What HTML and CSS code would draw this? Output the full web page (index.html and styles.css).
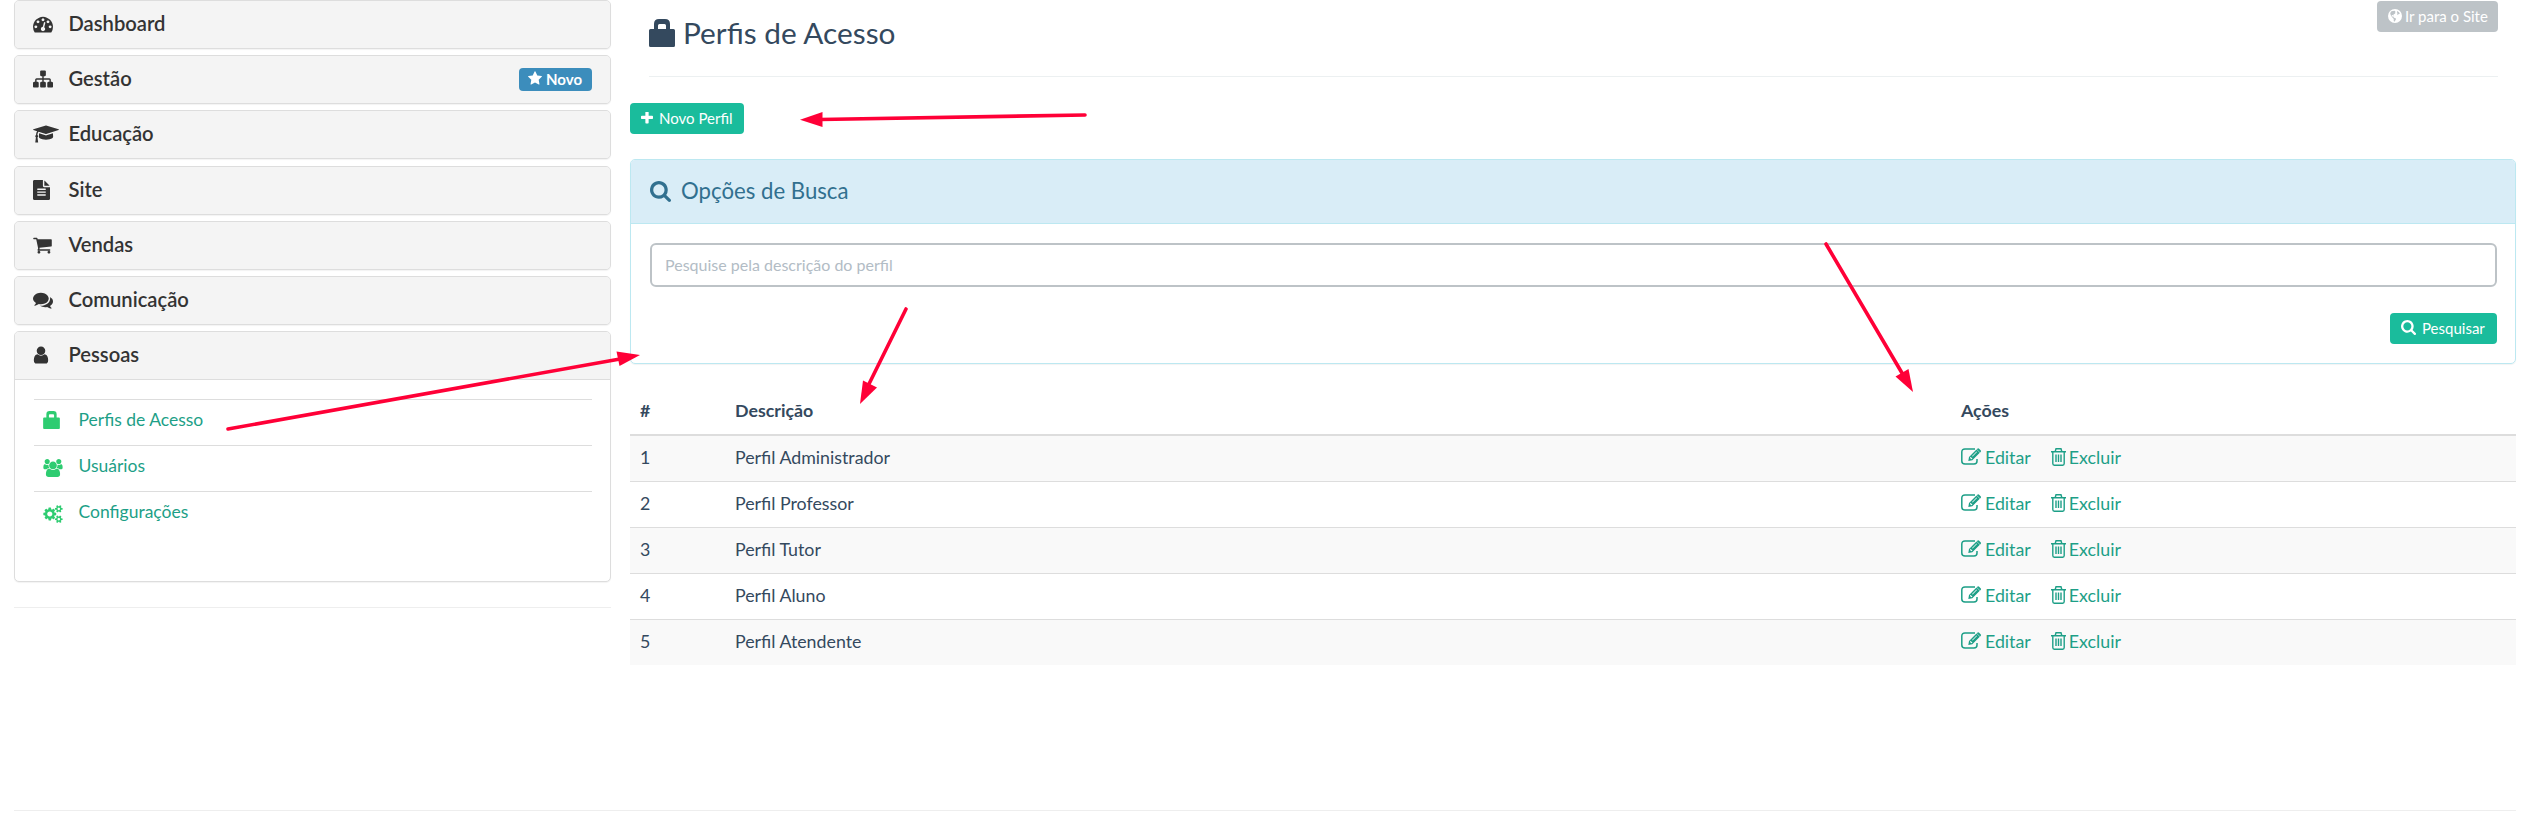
FILE: index.html
```html
<!DOCTYPE html>
<html lang="pt-BR">
<head>
<meta charset="utf-8">
<title>Perfis de Acesso</title>
<link rel="stylesheet" href="styles.css">
</head>
<body>
<svg class="sprite" aria-hidden="true">
  <symbol id="tachometer" viewBox="0 0 1792 1792"><path d="M384 1152q0-53-37.500-90.500t-90.500-37.500-90.500 37.500-37.500 90.500 37.500 90.500 90.500 37.500 90.500-37.500 37.500-90.500zm192-448q0-53-37.500-90.500t-90.500-37.500-90.500 37.500-37.500 90.500 37.500 90.500 90.500 37.500 90.500-37.500 37.500-90.500zm428 481l101-382q6-26-7.500-48.500t-38.500-29.500-48 6.500-30 39.500l-101 382q-60 5-107 43.500t-63 98.500q-20 77 20 146t117 89 146-20 89-117q16-60-6-117t-72-91zm660-33q0-53-37.500-90.500t-90.500-37.500-90.500 37.500-37.500 90.500 37.500 90.500 90.500 37.500 90.500-37.500 37.500-90.500zm-640-640q0-53-37.500-90.500t-90.500-37.500-90.500 37.500-37.500 90.500 37.500 90.500 90.500 37.500 90.500-37.500 37.500-90.500zm448 192q0-53-37.500-90.500t-90.500-37.500-90.500 37.500-37.500 90.500 37.500 90.500 90.500 37.500 90.500-37.500 37.500-90.500zm320 448q0 261-141 483-19 29-54 29h-1402q-35 0-54-29-141-221-141-483 0-182 71-348t191-286 286-191 348-71 348 71 286 191 191 286 71 348z"/></symbol>
  <symbol id="sitemap" viewBox="0 0 1792 1792"><path d="M1792 1248v320q0 40-28 68t-68 28h-320q-40 0-68-28t-28-68v-320q0-40 28-68t68-28h96v-192h-512v192h96q40 0 68 28t28 68v320q0 40-28 68t-68 28h-320q-40 0-68-28t-28-68v-320q0-40 28-68t68-28h96v-192h-512v192h96q40 0 68 28t28 68v320q0 40-28 68t-68 28h-320q-40 0-68-28t-28-68v-320q0-40 28-68t68-28h96v-192q0-52 38-90t90-38h512v-192h-96q-40 0-68-28t-28-68v-320q0-40 28-68t68-28h320q40 0 68 28t28 68v320q0 40-28 68t-68 28h-96v192h512q52 0 90 38t38 90v192h96q40 0 68 28t28 68z"/></symbol>
  <symbol id="graduation" viewBox="0 0 2304 1792"><path d="M1774 836l18 316q4 69-82 128t-235 93.500-323 34.500-323-34.500-235-93.500-82-128l18-316 574 181q22 7 48 7t48-7zm530-324q0 23-22 31l-1120 352q-4 1-10 1t-10-1l-652-206q-43 34-71 111.500t-34 178.500q63 36 63 109 0 69-58 107l58 433q2 14-8 25-9 11-24 11h-192q-15 0-24-11-10-11-8-25l58-433q-58-38-58-107 0-73 65-111 11-207 98-330l-333-104q-22-8-22-31t22-31l1120-352q4-1 10-1t10 1l1120 352q22 8 22 31z"/></symbol>
  <symbol id="file" viewBox="128 0 1536 1792"><path d="M1596 476q14 14 28 36h-472v-472q22 14 36 28zm-476 164h544v1056q0 40-28 68t-68 28h-1344q-40 0-68-28t-28-68v-1600q0-40 28-68t68-28h800v544q0 40 28 68t68 28zm160 736v-64q0-14-9-23t-23-9h-704q-14 0-23 9t-9 23v64q0 14 9 23t23 9h704q14 0 23-9t9-23zm0-256v-64q0-14-9-23t-23-9h-704q-14 0-23 9t-9 23v64q0 14 9 23t23 9h704q14 0 23-9t9-23zm0-256v-64q0-14-9-23t-23-9h-704q-14 0-23 9t-9 23v64q0 14 9 23t23 9h704q14 0 23-9t9-23z"/></symbol>
  <symbol id="cart" viewBox="64 0 1664 1792"><path d="M704 1536q0 52-38 90t-90 38-90-38-38-90 38-90 90-38 90 38 38 90zm896 0q0 52-38 90t-90 38-90-38-38-90 38-90 90-38 90 38 38 90zm128-1088v512q0 24-16.500 42.500t-40.500 21.500l-1044 122q13 60 13 70 0 16-24 64h920q26 0 45 19t19 45-19 45-45 19h-1024q-26 0-45-19t-19-45q0-11 8-31.500t16-36 21.500-40 15.500-29.500l-177-823h-204q-26 0-45-19t-19-45 19-45 45-19h256q16 0 28.500 6.500t19.500 15.500 13 24.500 8 26 5.500 29.500 4.500 26h1201q26 0 45 19t19 45z"/></symbol>
  <symbol id="comments" viewBox="0 0 1792 1792"><path d="M1408 768q0 139-94 257t-256.500 186.500-353.500 68.500q-86 0-176-16-124 88-278 128-36 9-86 16h-3q-11 0-20.500-8t-11.500-21q-1-3-1-6.500t.5-6.500 2-6l2.500-5 3.500-5.500 4-5 4.500-5 4-4.500q5-6 23-25t26-29.500 22.500-29 25-38.500 20.500-44q-124-72-195-177t-71-224q0-139 94-257t256.500-186.500 353.500-68.500 353.500 68.500 256.500 186.500 94 257zm384 256q0 120-71 224.500t-195 176.500q10 24 20.500 44t25 38.500 22.500 29 26 29.500 23 25q1 1 4 4.500t4.500 5 4 5 3.500 5.500l2.500 5 2 6 .5 6.500-1 6.500q-3 14-13 22t-22 7q-50-7-86-16-154-40-278-128-90 16-176 16-271 0-472-132 58 4 88 4 161 0 309-45t264-129q125-92 192-212t67-254q0-77-23-152 129 71 204 178t75 230z"/></symbol>
  <symbol id="user" viewBox="256 0 1280 1792"><path d="M1536 1399q0 109-62.500 187t-150.500 78h-854q-88 0-150.500-78t-62.500-187q0-85 8.500-160.500t31.500-152 58.500-131 94-89 134.500-34.500q131 128 313 128t313-128q76 0 134.500 34.500t94 89 58.500 131 31.500 152 8.500 160.500zm-256-887q0 159-112.500 271.500t-271.500 112.500-271.500-112.500-112.500-271.500 112.500-271.500 271.500-112.500 271.500 112.500 112.500 271.500z"/></symbol>
  <symbol id="lock" viewBox="0 0 26 28"><path fill-rule="evenodd" d="M1.500 10H5V5q0-5 5-5h6q5 0 5 5v5h3.500q1.500 0 1.500 1.500v15q0 1.500-1.500 1.500h-23q-1.500 0-1.500-1.500v-15q0-1.500 1.500-1.500zM9 10h8V6.500q0-1.500-1.500-1.500h-5Q9 5 9 6.500z"/></symbol>
  <symbol id="users" viewBox="0 0 1920 1792"><path d="M593 896q-162 5-265 128h-134q-82 0-138-40.500t-56-118.500q0-353 124-353 6 0 43.500 21t97.500 42.500 119 21.500q67 0 133-23-5 37-5 66 0 139 81 256zm1071 637q0 120-73 189.500t-194 69.500h-874q-121 0-194-69.500t-73-189.500q0-53 3.500-103.500t14-109 26.500-108.500 43-97.500 62-81 85.500-53.500 111.500-20q10 0 43 21.500t73 48 107 48 135 21.500 135-21.500 107-48 73-48 43-21.500q61 0 111.500 20t85.500 53.500 62 81 43 97.500 26.500 108.500 14 109 3.500 103.500zm-1024-1277q0 106-75 181t-181 75-181-75-75-181 75-181 181-75 181 75 75 181zm704 384q0 159-112.500 271.500t-271.500 112.500-271.500-112.500-112.500-271.500 112.500-271.500 271.500-112.500 271.500 112.500 112.500 271.500zm576 225q0 78-56 118.500t-138 40.500h-134q-103-123-265-128 81-117 81-256 0-29-5-66 66 23 133 23 59 0 119-21.500t97.500-42.500 43.500-21q124 0 124 353zm-128-609q0 106-75 181t-181 75-181-75-75-181 75-181 181-75 181 75 75 181z"/></symbol>
  <symbol id="cogs" viewBox="0 0 1920 1792"><path d="M896 896q0-106-75-181t-181-75-181 75-75 181 75 181 181 75 181-75 75-181zm768 512q0-52-38-90t-90-38-90 38-38 90q0 53 37.500 90.500t90.500 37.500 90.500-37.500 37.500-90.500zm0-1024q0-52-38-90t-90-38-90 38-38 90q0 53 37.500 90.500t90.500 37.500 90.500-37.500 37.500-90.500zm-384 421v185q0 10-7 19.500t-16 10.500l-155 24q-11 35-32 76 34 48 90 115 7 11 7 20 0 12-7 19-23 30-82.500 89.500t-78.500 59.500q-11 0-21-7l-115-90q-37 19-77 31-11 108-23 155-7 24-30 24h-186q-11 0-20-7.500t-10-17.500l-23-153q-34-10-75-31l-118 89q-7 7-20 7-11 0-21-8-144-133-144-160 0-9 7-19 10-14 41-53t47-61q-23-44-35-82l-152-24q-10-1-17-9.500t-7-19.500v-185q0-10 7-19.500t16-10.500l155-24q11-35 32-76-34-48-90-115-7-11-7-20 0-12 7-20 22-30 82-89t79-59q11 0 21 7l115 90q34-18 77-32 11-108 23-154 7-24 30-24h186q11 0 20 7.500t10 17.500l23 153q34 10 75 31l118-89q8-7 20-7 11 0 21 8 144 133 144 160 0 8-7 19-12 16-42 54t-45 60q23 48 34 82l152 23q10 2 17 10.500t7 19.500zm640 533v140q0 16-149 31-12 27-30 52 51 113 51 138 0 4-4 7-122 71-124 71-8 0-46-47t-52-68q-20 2-30 2t-30-2q-14 21-52 68t-46 47q-2 0-124-71-4-3-4-7 0-25 51-138-18-25-30-52-149-15-149-31v-140q0-16 149-31 13-29 30-52-51-113-51-138 0-4 4-7 4-2 35-20t59-34 30-16q8 0 46 46.500t52 67.500q20-2 30-2t30 2q51-71 92-112l6-2q4 0 124 70 4 3 4 7 0 25-51 138 17 23 30 52 149 15 149 31zm0-1024v140q0 16-149 31-12 27-30 52 51 113 51 138 0 4-4 7-122 71-124 71-8 0-46-47t-52-68q-20 2-30 2t-30-2q-14 21-52 68t-46 47q-2 0-124-71-4-3-4-7 0-25 51-138-18-25-30-52-149-15-149-31v-140q0-16 149-31 13-29 30-52-51-113-51-138 0-4 4-7 4-2 35-20t59-34 30-16q8 0 46 46.500t52 67.500q20-2 30-2t30 2q51-71 92-112l6-2q4 0 124 70 4 3 4 7 0 25-51 138 17 23 30 52 149 15 149 31z"/></symbol>
  <symbol id="star" viewBox="64 0 1664 1792"><path d="M1728 647q0 22-26 48l-363 354 86 500q1 7 1 20 0 21-10.500 35.500t-30.500 14.500q-19 0-40-12l-449-236-449 236q-22 12-40 12-21 0-31.500-14.500t-10.500-35.500q0-6 2-20l86-500-364-354q-25-27-25-48 0-37 56-46l502-73 225-455q19-41 49-41t49 41l225 455 502 73q56 9 56 46z"/></symbol>
  <symbol id="plus" viewBox="192 192 1408 1408"><path d="M1600 736v192q0 40-28 68t-68 28h-416v416q0 40-28 68t-68 28h-192q-40 0-68-28t-28-68v-416h-416q-40 0-68-28t-28-68v-192q0-40 28-68t68-28h416v-416q0-40 28-68t68-28h192q40 0 68 28t28 68v416h416q40 0 68 28t28 68z"/></symbol>
  <symbol id="search" viewBox="64 128 1664 1664"><path d="M1216 832q0-185-131.500-316.500t-316.500-131.500-316.500 131.500-131.500 316.500 131.500 316.500 316.500 131.500 316.500-131.500 131.500-316.500zm512 832q0 52-38 90t-90 38q-54 0-90-38l-343-342q-179 124-399 124-143 0-273.500-55.500t-225-150-150-225-55.500-273.500 55.500-273.500 150-225 225-150 273.500-55.500 273.500 55.500 225 150 150 225 55.500 273.500q0 220-124 399l343 343q37 37 37 90z"/></symbol>
  <symbol id="globe" viewBox="0 0 14 14"><path fill-rule="evenodd" d="M7 0a7 7 0 1 1 0 14A7 7 0 0 1 7 0zM3 2.600L4.600 2l2-.3.900.8-.7.800.9.400L6.500 5l-1 .3.300 1.200-1.200-.6-1 .3.400 1.200 1.400.2.500 1.100 1.300.3.900.9-.8 1.600-.9 1.200-.7-.8.100-1.900-1.200-1.300L3 6.700 2.200 4.600zM9.200 2l1.800 1.200.9 1.500-1.200.2-.9 1-.8-1 .7-.8-.8-.5z"/></symbol>
  <symbol id="edit" viewBox="0 0 21 17"><path fill="none" stroke="currentColor" stroke-width="1.500" d="M14 1H4Q.8 1 .8 4v9q0 3 3.200 3h9q3 0 3-3v-2"/><path fill-rule="evenodd" d="M7.300 13l.7-4L15.500 1.500l3.300 3.300L11.300 12.300zM9 10l1.300 1.300 1.200-.5-2-2zM11 8l.5.500 4.500-4.500-.5-.5zM16.300.7q.9-.9 1.800 0L19.600 2.200q.9.900 0 1.800l-.5.500-3.300-3.300z"/></symbol>
  <symbol id="trash" viewBox="0 0 15 18"><path fill="none" stroke="currentColor" stroke-width="1.400" d="M0 3.700h15M4.200 3.500L5 .8h5l.8 2.700M1.800 4v11.500q0 1.700 1.500 1.700h8.400q1.500 0 1.500-1.700V4M5 6.500v7.500M7.500 6.500v7.500M10 6.500v7.500"/></symbol>
</svg>

<div class="layout">
  <aside class="sidebar">
    <div class="panel"><div class="item"><span class="slot"><svg class="i20"><use href="#tachometer"/></svg></span>Dashboard</div></div>
    <div class="panel"><div class="item"><span class="slot"><svg class="i20"><use href="#sitemap"/></svg></span>Gestão<span class="badge"><svg><use href="#star"/></svg>Novo</span></div></div>
    <div class="panel"><div class="item"><span class="slot"><svg class="i26"><use href="#graduation"/></svg></span>Educação</div></div>
    <div class="panel"><div class="item"><span class="slot"><svg class="i17"><use href="#file"/></svg></span>Site</div></div>
    <div class="panel"><div class="item"><span class="slot"><svg class="i19"><use href="#cart"/></svg></span>Vendas</div></div>
    <div class="panel"><div class="item"><span class="slot"><svg class="i20"><use href="#comments"/></svg></span>Comunicação</div></div>
    <div class="panel open">
      <div class="item"><span class="slot"><svg class="i16"><use href="#user"/></svg></span>Pessoas</div>
      <div class="submenu">
        <a class="sub"><span class="slot"><svg class="s-lock"><use href="#lock"/></svg></span>Perfis de Acesso</a>
        <a class="sub"><span class="slot"><svg class="s-wide"><use href="#users"/></svg></span>Usuários</a>
        <a class="sub"><span class="slot"><svg class="s-wide"><use href="#cogs"/></svg></span>Configurações</a>
      </div>
    </div>
    <hr class="side-rule">
  </aside>

  <main class="main">
    <header class="head">
      <h1 class="title"><svg><use href="#lock"/></svg>Perfis de Acesso</h1>
      <a class="btn grey"><svg class="g-globe"><use href="#globe"/></svg>Ir para o Site</a>
    </header>
    <a class="btn new"><svg class="g-plus"><use href="#plus"/></svg>Novo Perfil</a>
    <section class="search">
      <h3 class="search-head"><svg><use href="#search"/></svg>Opções de Busca</h3>
      <div class="search-body">
        <input class="field" type="text" placeholder="Pesquise pela descrição do perfil">
        <a class="btn go"><svg class="g-search"><use href="#search"/></svg>Pesquisar</a>
      </div>
    </section>
    <table class="table">
      <thead><tr><th class="c1">#</th><th class="c2">Descrição</th><th>Ações</th></tr></thead>
      <tbody>
        <tr><td>1</td><td>Perfil Administrador</td><td><div class="acts"><a><svg class="a-edit"><use href="#edit"/></svg>Editar</a><a><svg class="a-trash"><use href="#trash"/></svg>Excluir</a></div></td></tr>
        <tr><td>2</td><td>Perfil Professor</td><td><div class="acts"><a><svg class="a-edit"><use href="#edit"/></svg>Editar</a><a><svg class="a-trash"><use href="#trash"/></svg>Excluir</a></div></td></tr>
        <tr><td>3</td><td>Perfil Tutor</td><td><div class="acts"><a><svg class="a-edit"><use href="#edit"/></svg>Editar</a><a><svg class="a-trash"><use href="#trash"/></svg>Excluir</a></div></td></tr>
        <tr><td>4</td><td>Perfil Aluno</td><td><div class="acts"><a><svg class="a-edit"><use href="#edit"/></svg>Editar</a><a><svg class="a-trash"><use href="#trash"/></svg>Excluir</a></div></td></tr>
        <tr><td>5</td><td>Perfil Atendente</td><td><div class="acts"><a><svg class="a-edit"><use href="#edit"/></svg>Editar</a><a><svg class="a-trash"><use href="#trash"/></svg>Excluir</a></div></td></tr>
      </tbody>
    </table>
  </main>
</div>
<hr class="foot-rule">

<svg class="arrows" viewBox="0 0 2531 830" aria-hidden="true">
  <g stroke="#ff0037" stroke-width="3.600" stroke-linecap="round">
    <path d="M1085 115L820 119.500M228 429L620 359M906 309L868 386M1826 244L1902 373"/>
  </g>
  <g fill="#ff0037">
    <path d="M800 119.700l22.500-7.700v15z"/><path d="M640 355l-23.500-3.500 3 14.500z"/><path d="M860 404l3-23.500 14 7z"/><path d="M1913 392l-4.500-23-13 7.500z"/>
  </g>
</svg>
</body>
</html>
```
FILE: styles.css
```css
* { box-sizing: border-box; }
body { margin: 0; height: 830px; overflow: hidden; background: #fff; color: #34495e; font: 17.8px/26px Lato, "Open Sans", sans-serif; position: relative; }
svg { fill: currentColor; display: block; flex: none; }
.sprite { display: none; }
hr { border: 0; border-top: 1px solid #eee; margin: 0; }
.layout { display: flex; gap: 19px; padding: 0 15px 0 14px; height: 810px; }
.sidebar { width: 597px; flex: none; display: flex; flex-direction: column; }
.panel { border: 1px solid #ddd; border-radius: 5px; background: #f4f4f4; box-shadow: 0 1px 1px rgba(0,0,0,.05); margin-bottom: 6.2px; height: 49px; flex: none; overflow: hidden; }
.panel.open { height: 251px; background: #fff; margin-bottom: 25px; }
.item { display: flex; align-items: center; height: 47px; padding: 0 18px 3px; background: #f4f4f4; color: #333; font-size: 20.2px; font-weight: 600; }
.open .item { height: 48px; border-bottom: 1px solid #ddd; }
.item .slot { width: 35.5px; padding-top: 2px; }
.i20 { width: 20px; height: 20px; } .i26 { width: 26px; height: 20px; } .i17 { width: 17px; height: 20px; }
.i19 { width: 19px; height: 20px; } .i16 { width: 16px; height: 20px; }
.badge { margin: 3px 0 0 auto; display: flex; align-items: center; gap: 4px; height: 23px; width: 73px; padding: 0 0 2px 9px; border-radius: 4px; background: #3c8dbc; color: #fff; font-size: 15px; font-weight: 700; }
.badge svg { width: 14px; height: 15px; }
.submenu { padding: 19px 18px 0 19px; }
.sub { display: flex; align-items: center; height: 46px; border-top: 1px solid #ddd; padding: 0 0 5px 9px; color: #1d9f87; font-size: 17.5px; }
.sub .slot { width: 35.5px; color: #2ecc71; }
.s-lock { width: 17px; height: 18px; } .s-wide { width: 20px; height: 18px; margin-top: 3px; }
.main { flex: 1; display: flex; flex-direction: column; align-items: flex-start; }
.head { width: 1849px; margin-left: 19px; height: 77px; border-bottom: 1px solid #ecf0f1; display: flex; justify-content: space-between; align-items: flex-start; padding-top: 1px; }
.title { margin: 0; display: flex; align-items: center; gap: 8px; height: 64px; font-size: 29.8px; font-weight: 400; }
.title svg { width: 26px; height: 28px; }
.btn { display: flex; align-items: center; height: 31px; border-radius: 4px; background: #1abc9c; color: #fff; font-size: 15px; padding: 0 11px 2px; white-space: nowrap; }
.grey { background: #bdc3c7; gap: 3px; width: 121px; padding-right: 0; }
.new { margin-top: 26px; width: 114px; gap: 6px; }
.g-globe { width: 14px; height: 14px; } .g-plus { width: 12px; height: 12px; } .g-search { width: 15px; height: 15px; }
.search { width: 1886px; height: 205px; margin-top: 25px; border: 1px solid #bce8f1; border-radius: 5px; box-shadow: 0 1px 1px rgba(0,0,0,.05); }
.search-head { margin: 0; height: 64px; display: flex; align-items: center; gap: 10px; padding: 0 0 1px 19px; background: #d9edf7; border-bottom: 1px solid #bce8f1; border-radius: 4px 4px 0 0; color: #31708f; font-size: 22.2px; font-weight: 400; }
.search-head svg { width: 21px; height: 21px; }
.search-body { padding: 19px 18px 0 19px; display: flex; flex-direction: column; align-items: flex-end; gap: 26px; }
.field { width: 100%; height: 44px; border: 2px solid #bdc3c7; border-radius: 6px; padding: 0 13px 2px; font: 16px Lato, sans-serif; color: #34495e; outline: 0; }
.field::placeholder { color: #b2bcc5; opacity: 1; }
.go { width: 107px; gap: 6px; }
.table { width: 1886px; margin-top: 25px; border-collapse: separate; border-spacing: 0; table-layout: fixed; }
.table th { height: 47px; padding: 0 10px 3px; text-align: left; font-weight: 700; border-bottom: 2px solid #ddd; }
.c1 { width: 95px; } .c2 { width: 1226px; }
.table td { height: 46px; padding: 0 10px 4px; border-top: 1px solid #ddd; }
.table tbody tr:first-child td { height: 45px; border-top: 0; }
.table tbody tr:nth-child(odd) { background: #f9f9f9; }
.acts { display: flex; gap: 20px; color: #1d9f87; }
.acts a { display: flex; align-items: center; gap: 3px; }
.a-edit { width: 21px; height: 17px; } .a-trash { width: 15px; height: 18px; }
.foot-rule { margin: 0 15px 0 14px; }
.arrows { position: absolute; left: 0; top: 0; width: 2531px; height: 830px; pointer-events: none; }
```
